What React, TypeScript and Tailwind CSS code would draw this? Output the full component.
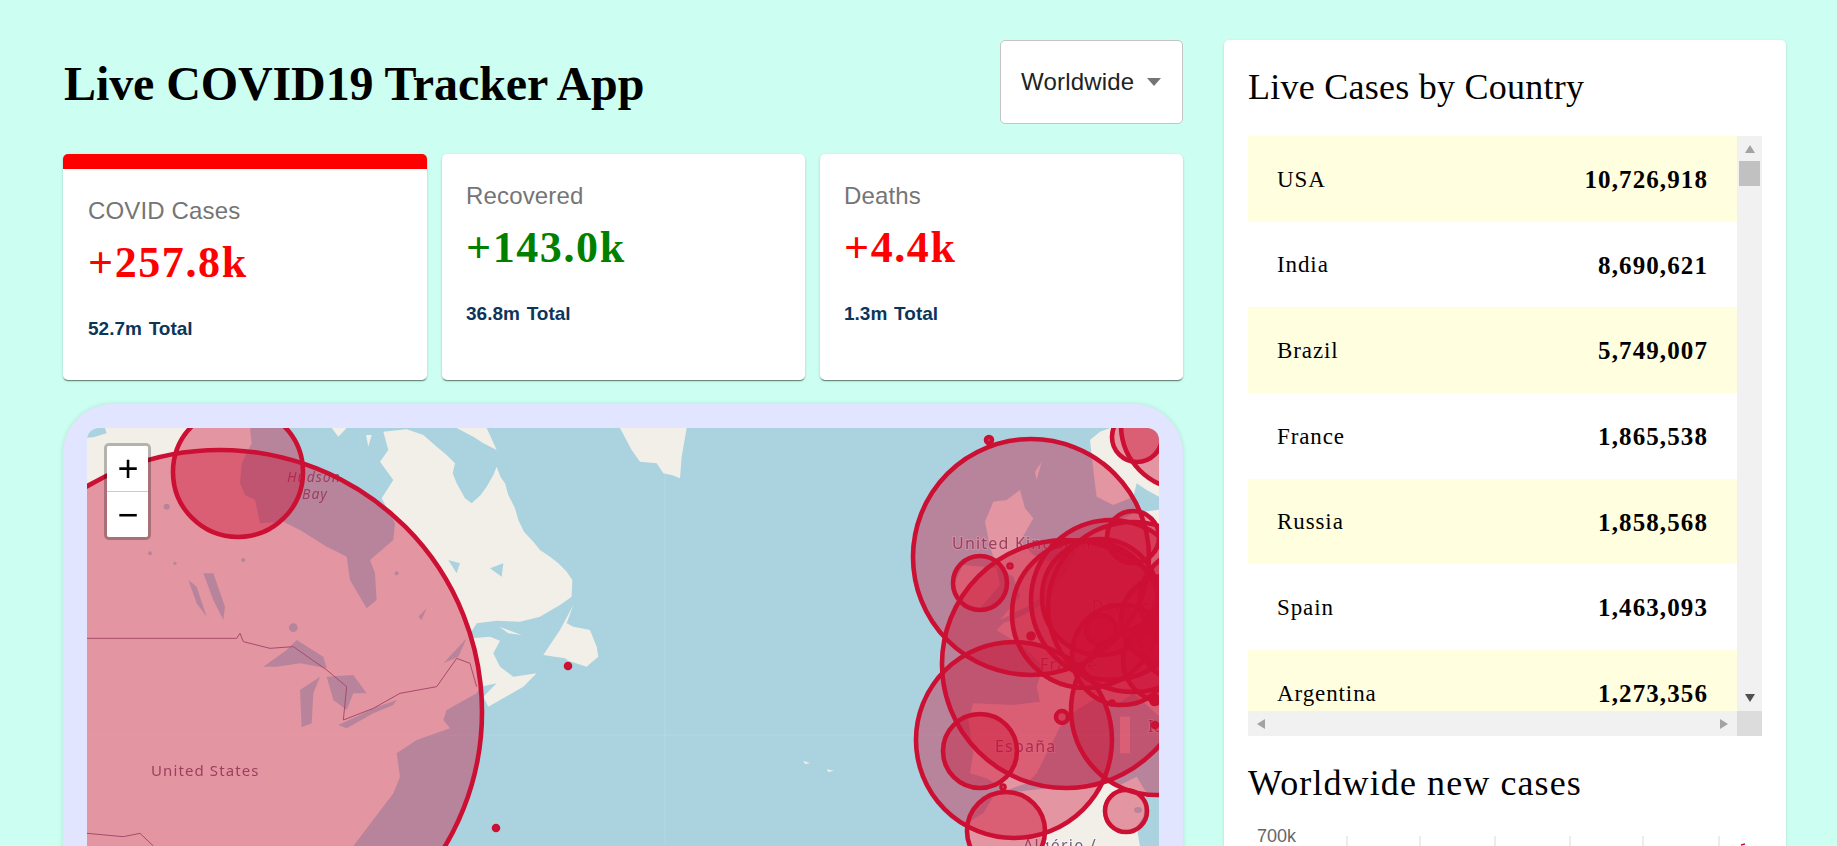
const countries = [
  ["USA", "10,726,918"],
  ["India", "8,690,621"],
  ["Brazil", "5,749,007"],
  ["France", "1,865,538"],
  ["Russia", "1,858,568"],
  ["Spain", "1,463,093"],
  ["Argentina", "1,273,356"],
];

// x, y, r in page pixels
const circles = [
  [220, 712, 262],
  [238, 472, 65],
  [568, 666, 2],
  [496, 828, 2],
  [989, 440, 3],
  [1031, 557, 118],
  [980, 583, 27],
  [1010, 566, 1.5],
  [1031, 636, 2.5],
  [1066, 664, 124],
  [1014, 740, 98],
  [980, 751, 37],
  [1006, 831, 39],
  [1062, 717, 6],
  [1003, 787, 1.5],
  [1126, 811, 21],
  [1156, 710, 85],
  [1137, 437, 25],
  [1185, 425, 64],
  [1100, 597, 58],
  [1111, 600, 80],
  [1086, 614, 74],
  [1133, 607, 85],
  [1133, 537, 26],
  [1101, 630, 15],
  [1122, 655, 50],
  [1165, 620, 44],
  [1165, 660, 42],
  [1180, 640, 40],
  [1190, 600, 50],
  [1155, 700, 4],
  [1112, 703, 1.5],
  [1155, 725, 2],
];

function Triangle({ dir, color }: { dir: "up" | "down" | "left" | "right"; color: string }) {
  const points = {
    up: "0,8 5,0 10,8",
    down: "0,0 10,0 5,8",
    left: "8,0 8,10 0,5",
    right: "0,0 0,10 8,5",
  }[dir];
  const box = dir === "up" || dir === "down" ? "0 0 10 8" : "0 0 8 10";
  const cls = dir === "up" || dir === "down" ? "w-[10px] h-[8px]" : "w-[8px] h-[10px]";
  return (
    <svg viewBox={box} className={cls}>
      <polygon points={points} fill={color} />
    </svg>
  );
}

function InfoBox({ title, cases, total, color, active }: { title: string; cases: string; total: string; color: string; active?: boolean }) {
  return (
    <div className="bg-white rounded-[5px] overflow-hidden shadow-[0_2px_1px_-1px_rgba(0,0,0,0.3),0_1px_1px_0_rgba(0,0,0,0.2),0_1px_3px_0_rgba(0,0,0,0.15)]">
      {active && <div className="h-[15px] bg-[#ff0000]" />}
      <div className={active ? "pt-[28px] pl-[25px]" : "pt-[28px] pl-[24px]"}>
        <p className="text-[24px] leading-[28px] tracking-[0.15px] text-[#757575] font-['Liberation_Sans',sans-serif]">{title}</p>
        <p className="mt-[10px] text-[44px] leading-[56px] font-bold tracking-[1.6px] font-['Liberation_Serif',serif]" style={{ color }}>
          {cases}
        </p>
        <p className="mt-[26px] text-[19px] leading-[24px] font-bold text-[#0d3559] [word-spacing:1.5px] font-['Liberation_Sans',sans-serif]">{total}</p>
      </div>
    </div>
  );
}

function MapDrawing() {
  return (
    <svg viewBox="87 428 1072 572" className="block w-[1072px] h-[572px]">
      <rect x="87" y="428" width="1072" height="572" fill="#aad3df" />

      <g className="blur-[0.5px]">
        <g transform="translate(60 400) scale(0.33333)" fill="#f2efe9">
          {/* north america */}
          <path d="M60,115 L100,112 L140,100 L135,84 L570,84 L575,130 L545,190 L540,250 L555,285 L585,300 L600,370 L670,365 L720,390 L800,440 L860,470 L870,540 L920,625 L950,600 L945,520 L930,480 L1000,420 L1005,370 L965,295 L1000,240 L960,185 L985,150 L970,95 L1040,88 L1090,105 L1130,140 L1160,165 L1185,190 L1178,220 L1190,250 L1215,295 L1235,310 L1262,285 L1280,260 L1300,225 L1310,200 L1322,232 L1335,250 L1345,285 L1365,325 L1375,360 L1392,395 L1420,425 L1440,450 L1470,470 L1495,490 L1520,515 L1537,540 L1535,590 L1500,615 L1470,632 L1440,650 L1380,665 L1310,662 L1250,670 L1225,710 L1235,715 L1290,710 L1320,722 L1300,760 L1320,800 L1360,830 L1430,820 L1390,860 L1285,920 L1270,890 L1310,850 L1262,860 L1250,880 L1160,930 L1150,960 L1170,985 L1070,1020 L1010,1060 L1020,1130 L1000,1180 L880,1338 L880,1900 L60,1900 Z" />
          <path d="M815,84 L860,84 L835,110 Z M918,105 L935,105 L925,140 Z" />
          <path d="M1190,84 L1280,84 L1310,150 L1270,130 L1240,110 Z" />
          <path d="M1318,680 L1385,705 L1345,700 Z" />
          {/* newfoundland */}
          <path d="M1540,615 L1500,690 L1450,765 L1515,775 L1525,782 L1580,800 L1615,770 L1610,740 L1590,690 L1540,680 L1520,670 Z" />
          {/* greenland */}
          <path d="M1680,84 L1880,84 L1865,170 L1860,235 L1835,225 L1810,220 L1790,190 L1740,185 L1715,150 Z" />
          {/* azores */}
          <path d="M2230,1082 L2250,1090 L2235,1092 Z M2300,1108 L2322,1112 L2305,1116 Z" />
        </g>

        <g transform="translate(60 400) scale(0.33333)" fill="#aad3df">
          <path d="M430,520 L460,520 L495,620 L490,660 L460,600 Z" />
          <path d="M385,540 L410,560 L440,650 L410,610 Z" />
          <circle cx="700" cy="683" r="13" />
          <path d="M610,800 L680,750 L710,720 L790,770 L800,805 L720,790 L650,800 Z" />
          <path d="M720,870 L780,830 L760,880 L755,970 L725,982 Z" />
          <path d="M800,830 L880,825 L920,880 L880,880 L860,930 L820,900 Z" />
          <path d="M835,975 L900,945 L940,925 L1010,900 L1000,915 L940,940 L860,985 Z" />
          <path d="M1150,790 L1220,715 L1195,770 Z" />
          <path d="M1290,505 L1330,490 L1325,530 Z M1165,480 L1200,490 L1190,520 Z" />
          <path d="M1075,650 L1100,625 L1085,660 Z" />
          <circle cx="320" cy="320" r="9" />
          <circle cx="270" cy="460" r="6" />
          <circle cx="345" cy="490" r="5" />
          <circle cx="550" cy="480" r="6" />
          <circle cx="1010" cy="520" r="6" />
        </g>

        <g transform="translate(880 400) scale(0.33333)" fill="#f2efe9">
          {/* scandinavia */}
          <path d="M630,120 L660,95 L690,84 L900,84 L900,300 L837,290 L800,270 L770,250 L760,290 L700,315 L650,290 L640,210 Z" />
          {/* scotland and england */}
          <path d="M315,365 L340,305 L380,300 L420,270 L435,325 L460,355 L420,425 L460,465 L510,485 L490,590 L440,620 L360,660 L420,590 L400,530 L350,500 L330,440 Z" />
          <path d="M465,215 L485,185 L470,240 Z" />
          {/* ireland */}
          <path d="M220,555 L250,495 L350,505 L360,555 L300,625 L240,605 Z" />
          {/* europe */}
          <path d="M900,320 L760,340 L700,370 L640,400 L590,450 L560,510 L510,580 L490,610 L440,640 L420,650 L370,670 L350,690 L430,740 L490,800 L470,860 L480,905 L400,915 L280,910 L265,960 L280,1060 L270,1120 L320,1135 L380,1170 L440,1150 L470,1120 L510,1040 L540,980 L590,930 L640,900 L700,920 L760,880 L840,950 L900,980 Z" />
          <path d="M720,950 L750,950 L750,1060 L720,1060 Z" />
          {/* africa */}
          <path d="M265,1338 L260,1270 L310,1240 L340,1190 L370,1180 L670,1145 L710,1160 L770,1130 L800,1180 L790,1250 L770,1280 L790,1400 L265,1400 Z" />
        </g>
        <ellipse cx="1138" cy="810" rx="4" ry="3" fill="#aad3df" />
      </g>

      <g transform="translate(60 400) scale(0.33333)" fill="none" stroke="#8f6f8f" strokeWidth="3">
        <path d="M81,715 L530,715 L540,700 L550,725 L630,745 L700,740 L800,810 L860,860 L850,960 L940,925 L1020,880 L1130,860 L1190,775 L1230,790 L1250,860" />
        <path d="M81,1300 L190,1310 L240,1300 L280,1338" />
      </g>

      <path d="M87,735 L1159,735 M665,428 L665,900" stroke="#ffffff" strokeOpacity="0.12" strokeWidth="1" />

      <g fontFamily="'Noto Sans', sans-serif" fill="#7a5f7c">
        <text x="151" y="776" fontSize="15" letterSpacing="1.1">United States</text>
        <text x="287" y="482" fontSize="14" fontStyle="italic" letterSpacing="1">Hudson</text>
        <text x="302" y="499" fontSize="14" fontStyle="italic" letterSpacing="1">Bay</text>
        <g stroke="#ffffff" strokeOpacity="0.45" strokeWidth="2" style={{ paintOrder: "stroke" }}>
          <text x="952" y="549" fontSize="16" letterSpacing="1.2">United Kingdom</text>
          <text x="995" y="752" fontSize="16" letterSpacing="1.2">España</text>
          <text x="1040" y="670" fontSize="16" letterSpacing="1.2">France</text>
          <text x="1092" y="612" fontSize="16" letterSpacing="1.2">Deutschland</text>
          <text x="1148" y="732" fontSize="16">Io</text>
          <text x="1023" y="851" fontSize="16" letterSpacing="1.2">Algérie /</text>
        </g>
      </g>

      {circles.map(([x, y, r], i) => (
        <circle key={i} cx={x} cy={y} r={r} fill="#cc1034" fillOpacity="0.4" stroke="#cc1034" strokeWidth="4.6" />
      ))}
    </svg>
  );
}

function CasesTable() {
  return (
    <div className="mt-[27px] h-[600px] flex flex-col">
      <div className="flex-1 flex min-h-0">
        <div className="flex-1 overflow-hidden">
          {countries.map(([name, cases], i) => (
            <div key={name} className={`h-[85.67px] shrink-0 flex items-center justify-between pt-[2px] pl-[29px] pr-[29px] text-black ${i % 2 === 0 ? "bg-[#ffffe0]" : "bg-white"}`}>
              <span className="text-[23px] tracking-[0.9px]">{name}</span>
              <strong className="text-[25px] tracking-[1.1px]">{cases}</strong>
            </div>
          ))}
        </div>
        <div className="w-[25px] bg-[#f1f1f1] flex flex-col items-center relative">
          <div className="mt-[9px]"><Triangle dir="up" color="#a3a3a3" /></div>
          <div className="mt-[8px] w-[21px] h-[25px] bg-[#c1c1c1]" />
          <div className="mt-auto mb-[9px]"><Triangle dir="down" color="#505050" /></div>
        </div>
      </div>
      <div className="h-[25px] flex">
        <div className="flex-1 bg-[#f1f1f1] flex items-center justify-between px-[9px]">
          <Triangle dir="left" color="#a3a3a3" />
          <Triangle dir="right" color="#a3a3a3" />
        </div>
        <div className="w-[25px] bg-[#dcdcdc]" />
      </div>
    </div>
  );
}

function LineGraph() {
  return (
    <svg viewBox="1248 804 514 60" className="block w-[514px] h-[60px]">
      <text x="1257" y="842" fontSize="18" fill="#666666" fontFamily="'Liberation Sans', sans-serif">700k</text>
      {[1347, 1420, 1495, 1570, 1643, 1719].map((x) => (
        <line key={x} x1={x} y1="836" x2={x} y2="860" stroke="#d9d9d9" strokeWidth="1" />
      ))}
      <path d="M1741,845 L1745,844" stroke="#cc1034" strokeWidth="1.5" />
    </svg>
  );
}

function App() {
  return (
    <div className="h-screen overflow-hidden bg-[#ccfff1] flex items-start gap-[41px] pl-[63px] pr-[51px] pt-[40px] font-['Liberation_Serif',serif]">
      <div className="w-[1120px] shrink-0">
        <div className="h-[84px] flex items-center justify-between">
          <h1 className="text-[48px] leading-none font-bold tracking-[-0.1px] text-black mt-[3px] ml-[1px]">Live COVID19 Tracker App</h1>
          <div className="w-[183px] h-[84px] bg-white border border-[#c4c4c4] rounded-[5px] flex items-center pl-[20px] font-['Liberation_Sans',sans-serif] text-[24px] tracking-[0.2px] text-[#222222]">
            Worldwide
            <svg viewBox="0 0 14 8" className="w-[14px] h-[8px] ml-[13px]">
              <polygon points="0,0 14,0 7,8" fill="#757575" />
            </svg>
          </div>
        </div>

        <div className="mt-[30px] h-[226px] grid grid-cols-[364px_363px_363px] gap-[15px]">
          <InfoBox active title="COVID Cases" cases="+257.8k" total="52.7m Total" color="#ff0000" />
          <InfoBox title="Recovered" cases="+143.0k" total="36.8m Total" color="#008000" />
          <InfoBox title="Deaths" cases="+4.4k" total="1.3m Total" color="#ff0000" />
        </div>

        <div className="mt-[24px] h-[620px] p-[24px] bg-[#e1e5ff] rounded-[50px] shadow-[0_0_5px_rgba(0,0,0,0.12)]">
          <div className="relative h-[572px] rounded-[12px] overflow-hidden">
            <MapDrawing />
            <div className="absolute left-[17px] top-[15px] w-[47px] rounded-[5px] border-[3px] border-[#00000040] bg-clip-padding overflow-hidden font-['Liberation_Mono',monospace] text-[36px] text-black">
              <div className="h-[46px] pt-[6px] pl-[1px] bg-white border-b border-[#cccccc] flex items-center justify-center">+</div>
              <div className="h-[45px] pt-[7px] pl-[1px] bg-white flex items-center justify-center">−</div>
            </div>
          </div>
        </div>
      </div>

      <div className="flex-1 h-[1000px] bg-white rounded-[5px] pt-[25px] px-[24px] shadow-[0_1px_3px_rgba(0,0,0,0.15)]">
        <h3 className="text-[36px] leading-[44px] tracking-[0.25px] text-black">Live Cases by Country</h3>
        <CasesTable />
        <h3 className="mt-[26px] text-[36px] leading-[42px] tracking-[1.1px] text-black">Worldwide new cases</h3>
        <LineGraph />
      </div>
    </div>
  );
}

export default App;
